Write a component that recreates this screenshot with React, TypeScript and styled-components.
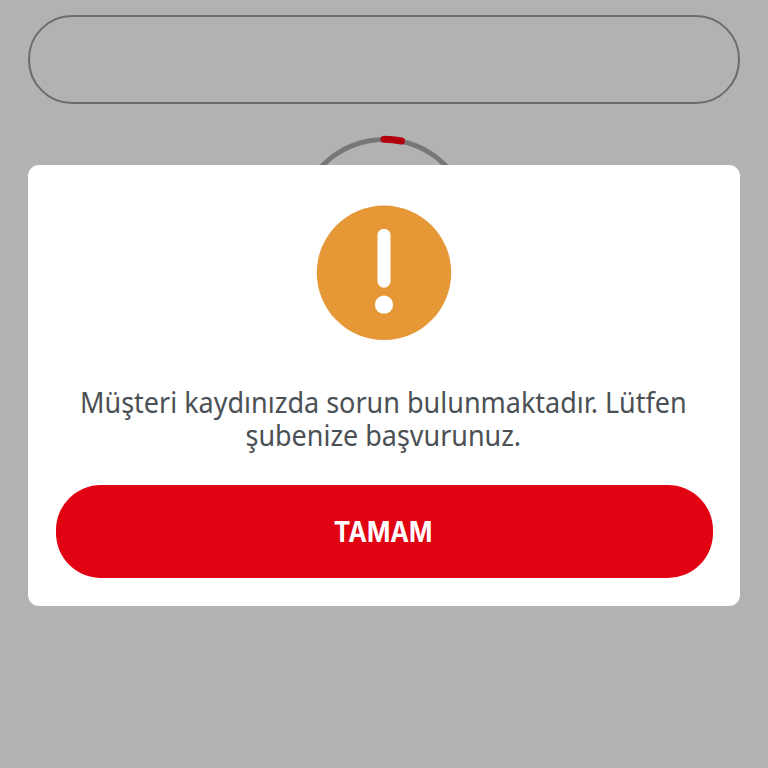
import React from "react";
import styled, { createGlobalStyle } from "styled-components";

const GlobalStyle = createGlobalStyle`
  * { box-sizing: border-box; }
  html, body { margin: 0; background: #b2b2b2; }
`;

const Page = styled.main`
  position: relative;
  width: 768px;
  height: 768px;
  overflow: hidden;
  display: flex;
  flex-direction: column;
  align-items: center;
  padding-top: 15px;
  background: #b2b2b2;
  font-family: "Noto Sans", sans-serif;
`;

const Field = styled.div`
  width: 712px;
  height: 89px;
  flex: none;
  border: 2px solid #6c6c6c;
  border-radius: 44px;
`;

const Spinner = styled.svg`
  width: 180px;
  height: 180px;
  flex: none;
  margin-top: 31px;
`;

const Overlay = styled.div`
  position: absolute;
  inset: 0;
  display: flex;
  justify-content: center;
  align-items: flex-start;
  padding-top: 165px;
`;

const Dialog = styled.section`
  width: 712px;
  height: 441px;
  padding: 40px 28px 28px;
  display: flex;
  flex-direction: column;
  align-items: center;
  background: #fff;
  border-radius: 11px;
`;

const WarningIcon = styled.svg`
  width: 136px;
  height: 136px;
  flex: none;
`;

const Message = styled.p`
  margin: 44px 2px 0 0;
  font-size: 28.6px;
  font-weight: 370;
  line-height: 33px;
  color: #4b5055;
  text-align: center;
  display: flex;
  flex-direction: column;
  align-items: center;
`;

const Line = styled.span<{ $scale: number }>`
  white-space: nowrap;
  transform: scaleX(${(p) => p.$scale});
`;

const Confirm = styled.button`
  width: 657px;
  height: 93px;
  margin-top: auto;
  padding: 0 1px 0 0;
  border: 0;
  border-radius: 45px;
  display: flex;
  align-items: center;
  justify-content: center;
  background: #e10311;
  color: #fff;
  font: 700 28.5px/34px Inter, sans-serif;
`;

export default function App() {
  return (
    <Page>
      <GlobalStyle />
      <Field />
      <Spinner viewBox="0 0 180 180" fill="none">
        <circle cx="90" cy="90" r="85.5" stroke="#777" strokeWidth="5" />
        <path d="M90 4.2A85.5 85.5 0 0 1 107.5 6" stroke="#b3000f" strokeWidth="7" strokeLinecap="round" />
      </Spinner>
      <Overlay>
        <Dialog role="alertdialog">
          <WarningIcon viewBox="0 0 136 136">
            <circle cx="68" cy="67.8" r="67.2" fill="#e69736" />
            <rect x="61.5" y="23.7" width="13" height="59" rx="6.5" fill="#fff" />
            <circle cx="68" cy="99.7" r="9.1" fill="#fff" />
          </WarningIcon>
          <Message>
            <Line $scale={0.944}>Müşteri kaydınızda sorun bulunmaktadır. Lütfen</Line>
            <Line $scale={0.942}>şubenize başvurunuz.</Line>
          </Message>
          <Confirm>
            <Line $scale={0.88}>TAMAM</Line>
          </Confirm>
        </Dialog>
      </Overlay>
    </Page>
  );
}
